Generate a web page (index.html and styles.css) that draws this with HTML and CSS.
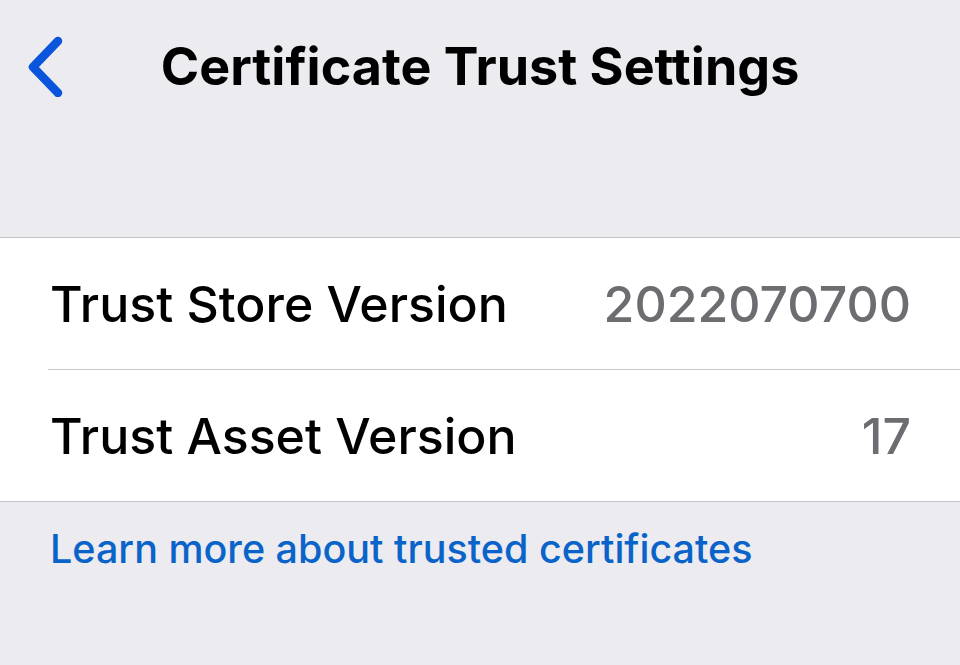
FILE: index.html
```html
<!DOCTYPE html>
<html>
<head>
<meta charset="utf-8">
<link rel="stylesheet" href="styles.css">
</head>
<body>
<div class="screen">
  <header class="nav">
    <div class="back">
      <svg width="40" height="62" viewBox="0 0 40 62"><path d="M34 6 L9 32 L34 58" fill="none" stroke="#0a55dc" stroke-width="8.5" stroke-linecap="round" stroke-linejoin="round"/></svg>
    </div>
    <h1 class="title">Certificate Trust Settings</h1>
  </header>
  <section class="group">
    <div class="row">
      <span class="label">Trust Store Version</span>
      <span class="value">2022070700</span>
    </div>
    <div class="row last">
      <span class="label">Trust Asset Version</span>
      <span class="value">17</span>
    </div>
  </section>
  <p class="link">Learn more about trusted certificates</p>
</div>
</body>
</html>
```
FILE: styles.css
```css
html, body { margin: 0; padding: 0; }
body { background: #ebebf0; font-family: Inter, "Noto Sans", sans-serif; }
.screen { width: 960px; height: 665px; overflow: hidden; }
.nav { position: relative; height: 237px; box-sizing: border-box; }
.back { position: absolute; left: 24px; top: 35px; }
.title { margin: 0; padding-top: 37px; text-align: center; font-size: 52px; font-weight: 700; color: #000; letter-spacing: 0; line-height: 60px; }
.group { background: #fff; border-top: 1px solid #c3c3c7; border-bottom: 1px solid #c3c3c7; padding-left: 48px; }
.row { height: 131px; display: flex; align-items: center; justify-content: space-between; padding-right: 49px; border-bottom: 1px solid #c8c8cc; padding-left: 2px; }
.row.last { border-bottom: none; }
.label { font-size: 50px; color: #000; font-weight: 450; }
.value { font-size: 50px; color: #6c6c71; font-weight: 480; }
.link { margin: 0; padding: 22px 0 0 50px; font-size: 39.5px; color: #0a63c8; font-weight: 500; line-height: 50px; }
```
